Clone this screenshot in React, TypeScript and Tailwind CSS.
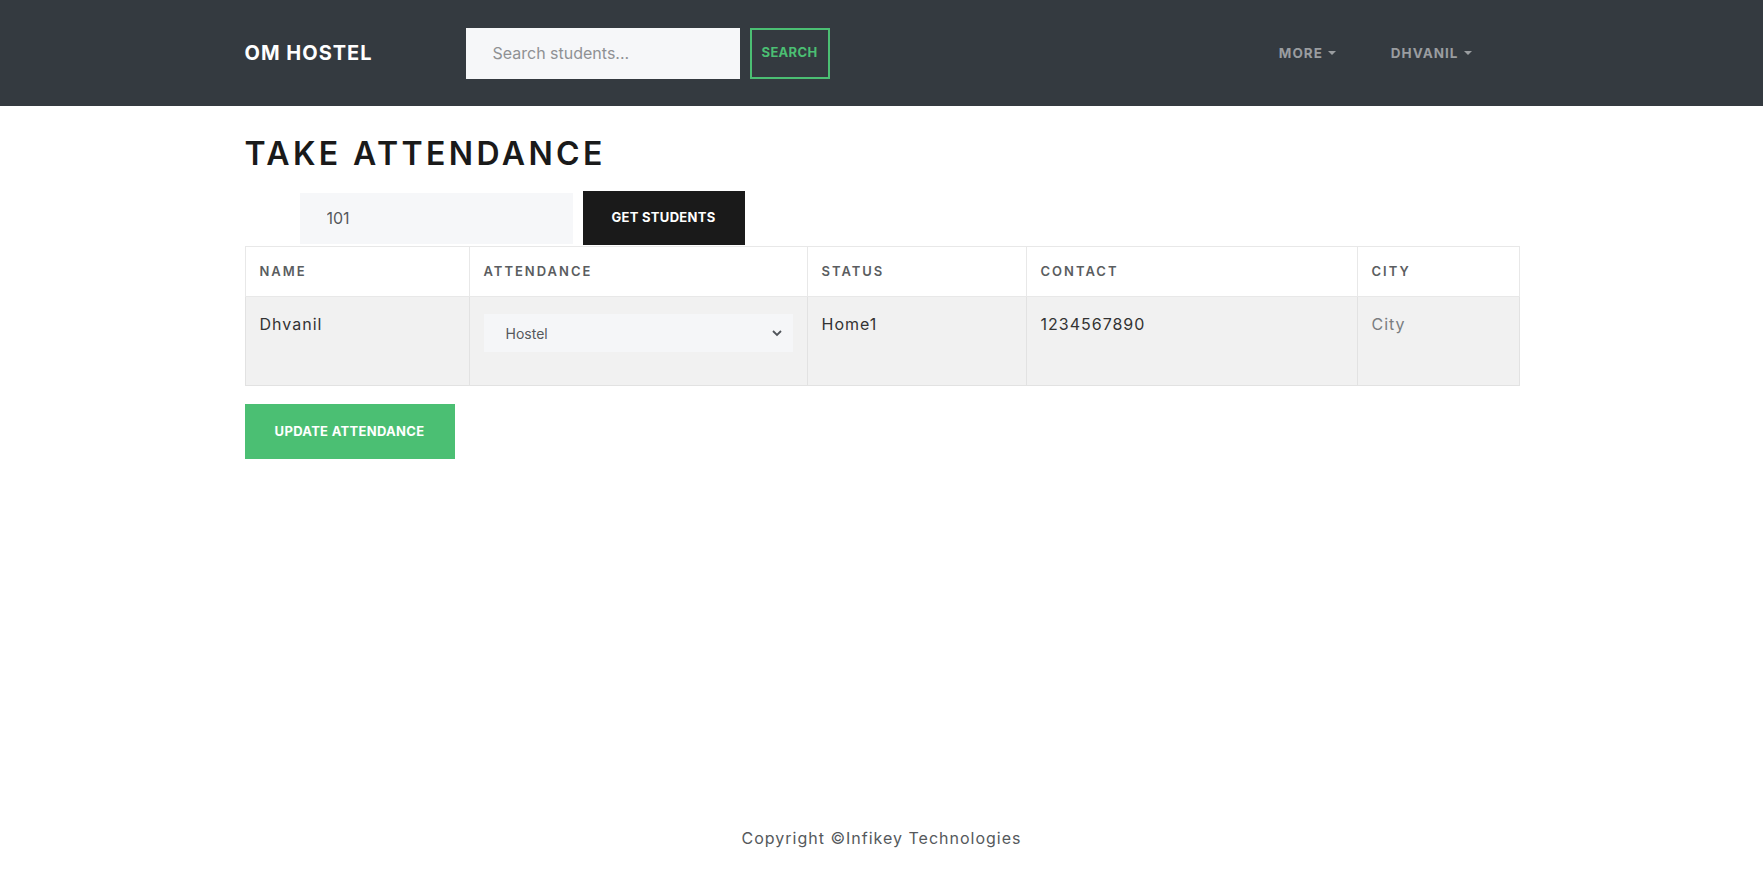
import React from 'react';

const font = { fontFamily: 'Inter, "Noto Sans", sans-serif' };

const Caret = () => (
  <span className="ml-[5px] inline-block h-0 w-0 border-x-[4px] border-t-[4px] border-x-transparent border-t-current align-middle" />
);

const Navbar = () => (
  <nav className="h-[106px] bg-[#343a40]">
    <div className="mx-auto flex h-full max-w-[1274px] items-center">
      <a className="w-[128px] shrink-0 whitespace-nowrap text-[20px] font-bold tracking-[1px] text-white">OM HOSTEL</a>
      <div className="ml-[93px] flex items-center">
        <input
          placeholder="Search students..."
          className="h-[51px] w-[274px] bg-[#f6f7f9] px-[27px] text-[16px] text-[#55595c] outline-none placeholder:text-[#8f9194]"
        />
        <button className="ml-[10px] h-[51px] w-[80px] border-2 border-[#4bbf73] text-[13px] font-bold tracking-[0.3px] text-[#4bbf73]">
          SEARCH
        </button>
      </div>
      <div className="ml-auto mr-[47px] flex items-center gap-[55px] text-[13.5px] font-bold tracking-[1px] text-[#9a9da0]">
        <a className="flex items-center">
          MORE
          <Caret />
        </a>
        <a className="flex items-center">
          DHVANIL
          <Caret />
        </a>
      </div>
    </div>
  </nav>
);

const columns = [
  { label: 'NAME', w: 'w-[224px]' },
  { label: 'ATTENDANCE', w: 'w-[338px]' },
  { label: 'STATUS', w: 'w-[219px]' },
  { label: 'CONTACT', w: 'w-[331px]' },
  { label: 'CITY', w: 'w-[162px]' },
];

export default function App() {
  return (
    <div className="flex min-h-screen flex-col bg-white" style={font}>
      <Navbar />

      <main className="mx-auto w-full max-w-[1274px] flex-1 pt-[29px]">
        <h1 className="text-[32px] font-semibold leading-[38px] tracking-[3.4px] text-[#1a1a1a]">TAKE ATTENDANCE</h1>

        {/* room number + fetch */}
        <div className="mt-[18px] flex items-center pl-[55px]">
          <input
            defaultValue="101"
            className="h-[51px] w-[273px] bg-[#f6f7f9] px-[27px] text-[16px] text-[#55595c] outline-none"
          />
          <button className="ml-[10px] h-[54px] w-[162px] bg-[#1a1a1a] text-[13px] font-bold tracking-[0.3px] text-white">
            GET STUDENTS
          </button>
        </div>

        <table className="mt-px w-full table-fixed border-collapse border border-[#e8e8e8]">
          <thead>
            <tr className="h-[50px]">
              {columns.map((c) => (
                <th
                  key={c.label}
                  className={`${c.w} border border-[#e8e8e8] px-[14px] text-left text-[13px] font-semibold tracking-[2px] text-[#5a5d60]`}
                >
                  {c.label}
                </th>
              ))}
            </tr>
          </thead>
          <tbody>
            <tr className="h-[89px] bg-[#f1f1f1] align-top text-[16px] tracking-[1px] text-[#333]">
              <td className="border border-[#e2e2e2] px-[14px] py-[15px]">Dhvanil</td>
              <td className="border border-[#e2e2e2] px-[14px] pt-[17px]">
                <div className="relative">
                  <select className="h-[38px] w-full appearance-none bg-[#f5f6f8] pl-[22px] text-[14px] tracking-normal text-[#55595c] outline-none">
                    <option>Hostel</option>
                    <option>Home</option>
                  </select>
                  <svg
                    className="pointer-events-none absolute right-[10px] top-[14px] h-[10px] w-[12px] text-[#50545a]"
                    viewBox="0 0 12 10"
                    fill="none"
                    stroke="currentColor"
                    strokeWidth={1.8}
                  >
                    <path d="M2 3l4 4 4-4" />
                  </svg>
                </div>
              </td>
              <td className="border border-[#e2e2e2] px-[14px] py-[15px]">Home1</td>
              <td className="border border-[#e2e2e2] px-[14px] py-[15px]">1234567890</td>
              <td className="border border-[#e2e2e2] px-[14px] py-[15px] text-[#7a7d80]">City</td>
            </tr>
          </tbody>
        </table>

        <button className="mt-[18px] h-[55px] w-[210px] bg-[#4bbf73] text-[13px] font-bold tracking-[0.3px] text-white">
          UPDATE ATTENDANCE
        </button>
      </main>

      <footer className="pb-[25px] text-center text-[16px] leading-[24px] tracking-[1px] text-[#55595c]">
        Copyright ©Infikey Technologies
      </footer>
    </div>
  );
}
